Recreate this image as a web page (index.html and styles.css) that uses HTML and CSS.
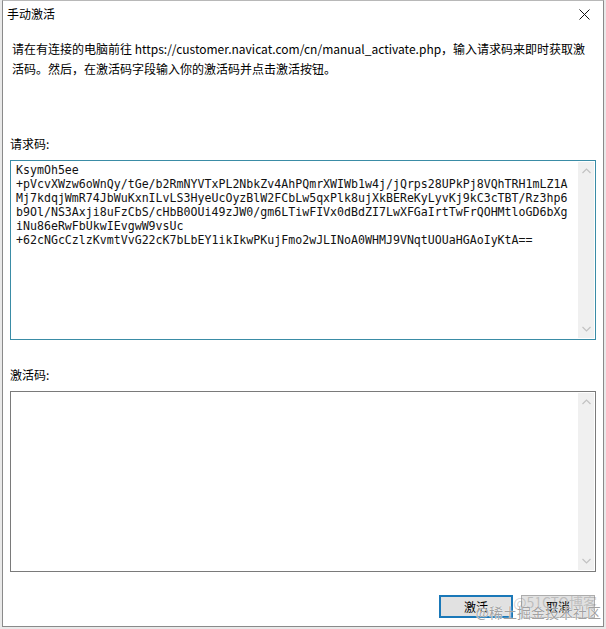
FILE: index.html
```html
<!DOCTYPE html>
<html lang="zh-CN">
<head>
<meta charset="utf-8">
<title>手动激活</title>
<link rel="stylesheet" href="styles.css">
</head>
<body>
<div class="window">
  <div class="titlebar">
    <span class="title">手动激活</span>
    <svg class="close" width="11" height="11" viewBox="0 0 11 11"><path d="M0.5 0.5 L10.5 10.5 M10.5 0.5 L0.5 10.5" stroke="#111" stroke-width="1" fill="none"/></svg>
  </div>
  <div class="body">
    <p class="intro">请在有连接的电脑前往 https://customer.navicat.com/cn/manual_activate.php，输入请求码来即时获取激活码。然后，在激活码字段输入你的激活码并点击激活按钮。</p>
    <div class="label label-first">请求码:</div>
    <div class="textbox focused">
      <pre class="code">KsymOh5ee
+pVcvXWzw6oWnQy/tGe/b2RmNYVTxPL2NbkZv4AhPQmrXWIWb1w4j/jQrps28UPkPj8VQhTRH1mLZ1A
Mj7kdqjWmR74JbWuKxnILvLS3HyeUcOyzBlW2FCbLw5qxPlk8ujXkBEReKyLyvKj9kC3cTBT/Rz3hp6
b9Ol/NS3Axji8uFzCbS/cHbB0OUi49zJW0/gm6LTiwFIVx0dBdZI7LwXFGaIrtTwFrQOHMtloGD6bXg
iNu86eRwFbUkwIEvgwW9vsUc
+62cNGcCzlzKvmtVvG22cK7bLbEY1ikIkwPKujFmo2wJLINoA0WHMJ9VNqtUOUaHGAoIyKtA==</pre>
      <div class="scrollbar">
        <svg class="arrow" width="9" height="6" viewBox="0 0 9 6"><path d="M0.5 5 L4.5 1 L8.5 5" stroke="#c2c2c2" stroke-width="1.2" fill="none"/></svg>
        <svg class="arrow" width="9" height="6" viewBox="0 0 9 6"><path d="M0.5 1 L4.5 5 L8.5 1" stroke="#c2c2c2" stroke-width="1.2" fill="none"/></svg>
      </div>
    </div>
    <div class="label label-second">激活码:</div>
    <div class="textbox second">
      <pre class="code"></pre>
      <div class="scrollbar">
        <svg class="arrow" width="9" height="6" viewBox="0 0 9 6"><path d="M0.5 5 L4.5 1 L8.5 5" stroke="#c2c2c2" stroke-width="1.2" fill="none"/></svg>
        <svg class="arrow" width="9" height="6" viewBox="0 0 9 6"><path d="M0.5 1 L4.5 5 L8.5 1" stroke="#c2c2c2" stroke-width="1.2" fill="none"/></svg>
      </div>
    </div>
    <div class="buttons">
      <button class="btn primary">激活</button>
      <button class="btn">取消</button>
    </div>
  </div>
  <div class="watermark">
    <span class="wm-back">@51CTO博客</span>
    <span class="wm-front">@稀土掘金技术社区</span>
  </div>
</div>
</body>
</html>
```
FILE: styles.css
```css
html, body {
  margin: 0;
  padding: 0;
}
body {
  background: #e9e9e9;
  width: 606px;
  height: 629px;
  overflow: hidden;
  font-family: "Noto Sans CJK SC", "Noto Sans", sans-serif;
  font-size: 12px;
  color: #000;
}
.window {
  position: relative;
  box-sizing: border-box;
  margin-left: 2px;
  width: 602px;
  height: 627px;
  background: #fff;
  border: 1px solid #8a8a8a;
  border-top-color: #b8b8b8;
  display: flex;
  flex-direction: column;
}
.titlebar {
  height: 26px;
  display: flex;
  align-items: center;
  justify-content: space-between;
  padding: 0 13px 0 4px;
}
.title {
  font-size: 12px;
  line-height: 26px;
}
.close {
  display: block;
}
.body {
  padding: 0 7px;
  display: flex;
  flex-direction: column;
}
.intro {
  margin: 12px 0 0 2px;
  line-height: 20px;
  font-size: 12px;
}
.label {
  line-height: 20px;
  font-size: 12px;
}
.label-first {
  margin-top: 55px;
}
.label-second {
  margin-top: 25px;
}
.textbox {
  box-sizing: border-box;
  margin-top: 6px;
  height: 180px;
  border: 1px solid #7a7a7a;
  display: flex;
  background: #fff;
}
.textbox.focused {
  border-color: #3a8ca6;
}
.textbox.second {
  height: 181px;
}
.code {
  flex: 1;
  margin: 0;
  padding: 2px 0 0 5px;
  font-family: "DejaVu Sans Mono", monospace;
  font-size: 11.6px;
  line-height: 14px;
  color: #111;
  white-space: pre;
  overflow: hidden;
}
.scrollbar {
  width: 16px;
  margin: 1px 1px 1px 0;
  background: #f0f0f0;
  display: flex;
  flex-direction: column;
  justify-content: space-between;
  align-items: center;
  padding: 6px 0;
  box-sizing: border-box;
}
.arrow {
  display: block;
}
.buttons {
  margin-top: 23px;
  display: flex;
  justify-content: flex-end;
  gap: 8px;
  padding-right: 1px;
}
.btn {
  box-sizing: border-box;
  width: 74px;
  height: 23px;
  background: #e1e1e1;
  border: 1px solid #adadad;
  font-family: "Noto Sans CJK SC", sans-serif;
  font-size: 12px;
  color: #000;
  padding: 0;
  line-height: 20px;
}
.btn.primary {
  border: 2px solid #1a78b8;
}
.watermark {
  position: absolute;
  right: 0;
  bottom: 2px;
  width: 110px;
  height: 32px;
  pointer-events: none;
}
.wm-back {
  position: absolute;
  right: 6px;
  top: 0;
  font-size: 14px;
  color: rgba(120, 120, 120, 0.35);
  white-space: nowrap;
}
.wm-front {
  position: absolute;
  right: 2px;
  top: 10px;
  font-size: 14px;
  color: rgba(130, 130, 130, 0.75);
  white-space: nowrap;
  text-shadow: 0 0 1px #fff, 0 0 1px #fff;
}
```
